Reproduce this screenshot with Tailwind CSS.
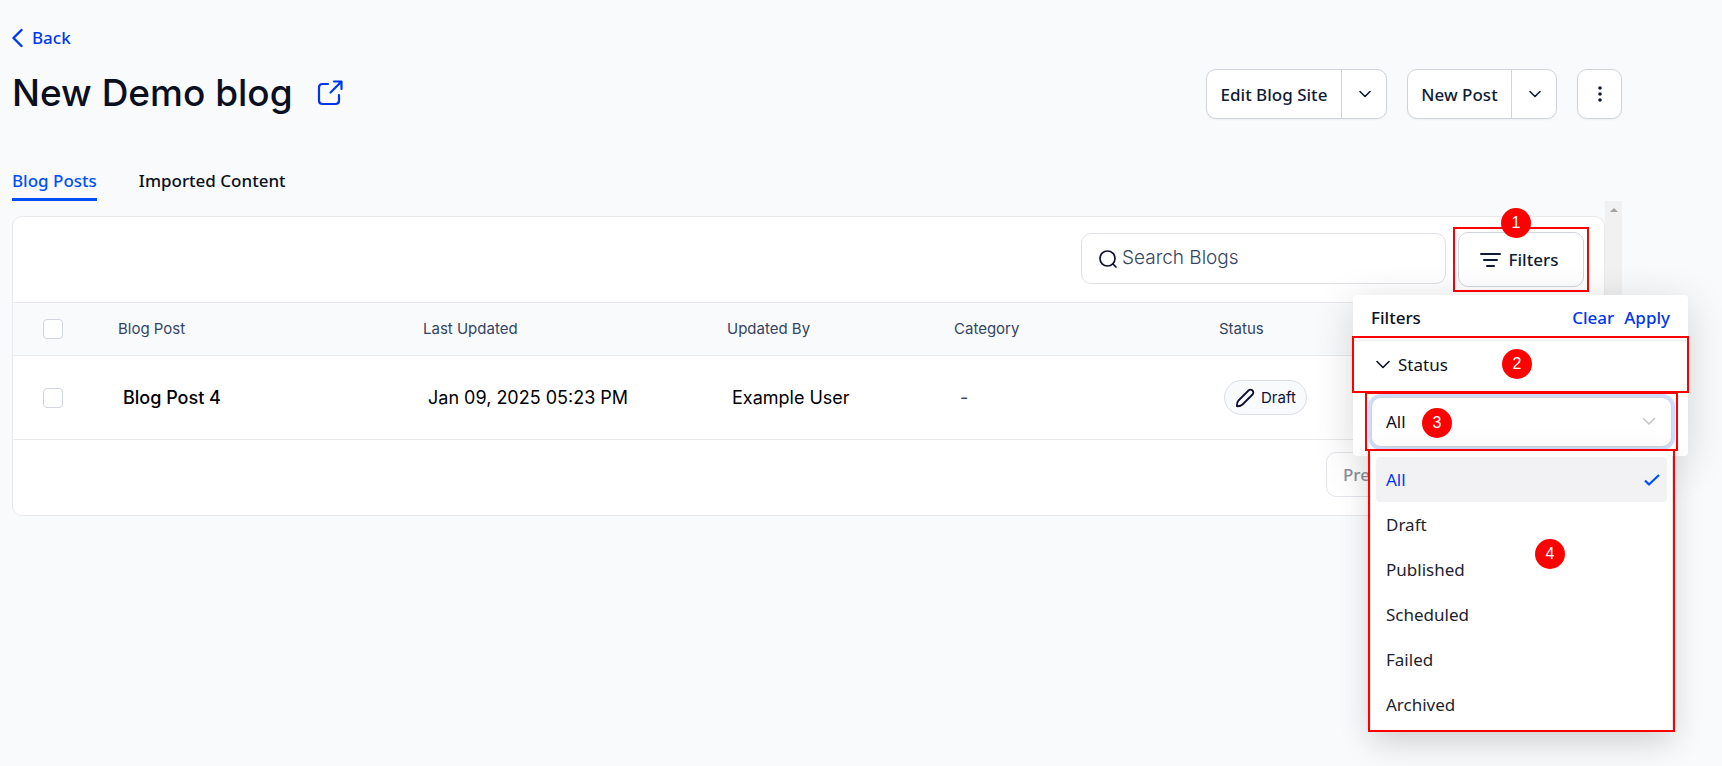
<!DOCTYPE html>
<html lang="en">
<head>
  <meta charset="UTF-8">
  <meta name="viewport" content="width=device-width, initial-scale=1.0">
  <title>New Demo blog</title>
  <script src="https://cdn.jsdelivr.net/npm/@tailwindcss/browser@4"></script>
</head>
<body class="min-h-screen bg-[#f9fafc] font-['Noto_Sans','Open_Sans',sans-serif] text-[#0b1020] overflow-x-hidden">
  <div class="pl-3 pr-[100px] pt-6">
    <header>
      <a href="#" class="inline-flex items-center gap-2 h-7 text-[17px] font-medium text-[#0037ee]">
        <svg class="w-3 h-5" viewBox="0 0 12 20" fill="none" stroke="currentColor" stroke-width="2.4" stroke-linecap="round" stroke-linejoin="round"><path d="M9.500 2 1.500 10 9.500 18"/></svg>
        Back
      </a>
      <div class="flex items-center justify-between mt-[15px]">
        <div class="flex items-center gap-[23px] pb-[2px]">
          <h1 class="text-[37px] leading-[46px] font-medium font-['Inter',sans-serif]">New Demo blog</h1>
          <a href="#" aria-label="Open blog" class="text-[#0037ee]">
            <svg class="w-7 h-7" viewBox="0 0 28 28" fill="none" stroke="currentColor" stroke-width="2.2" stroke-linecap="round" stroke-linejoin="round"><path d="M12 5H6.500Q3 5 3 8.500V21.500Q3 25 6.500 25H19.500Q23 25 23 21.500V16M18 2.500H25.500V10M25 3 14.500 13.500"/></svg>
          </a>
        </div>
        <div class="flex gap-5 text-[17px] font-medium text-[#101c35]">
          <div class="flex h-[50px] bg-white border border-[#d0d5dd] rounded-[10px] shadow-xs">
            <button class="w-[135px] pt-[2px] border-r border-[#d0d5dd]">Edit Blog Site</button>
            <button aria-label="More edit options" class="w-11 pl-[2px] flex items-center justify-center">
              <svg class="w-3 h-2" viewBox="0 0 12 8" fill="none" stroke="currentColor" stroke-width="1.600" stroke-linecap="round" stroke-linejoin="round"><path d="m1 1.500 5 5 5-5"/></svg>
            </button>
          </div>
          <div class="flex h-[50px] bg-white border border-[#d0d5dd] rounded-[10px] shadow-xs">
            <button class="w-[104px] pt-[2px] border-r border-[#d0d5dd]">New Post</button>
            <button aria-label="More post options" class="w-11 pl-[2px] flex items-center justify-center">
              <svg class="w-3 h-2" viewBox="0 0 12 8" fill="none" stroke="currentColor" stroke-width="1.600" stroke-linecap="round" stroke-linejoin="round"><path d="m1 1.500 5 5 5-5"/></svg>
            </button>
          </div>
          <button aria-label="More actions" class="w-[45px] h-[50px] flex items-center justify-center bg-white border border-[#d0d5dd] rounded-[10px] shadow-xs">
            <svg class="w-4 h-4" viewBox="0 0 16 16" fill="currentColor"><circle cx="8" cy="2" r="1.800"/><circle cx="8" cy="8" r="1.800"/><circle cx="8" cy="14" r="1.800"/></svg>
          </button>
        </div>
      </div>
      <nav class="flex gap-[42px] mt-[46px] text-[17px] font-medium">
        <a href="#" class="h-9 leading-8 text-[#0050fa] border-b-3 border-[#0050fa]">Blog Posts</a>
        <a href="#" class="h-9 leading-8">Imported Content</a>
      </nav>
    </header>

    <main class="flex font-['Inter',sans-serif]">
      <div class="grow min-w-0 mt-[15px] bg-white border border-[#e7e9ed] rounded-[10px]">
        <div class="flex items-center justify-end gap-3 h-[85px] pr-5">
          <label class="flex items-center gap-1 w-[365px] h-[51px] px-4 mb-[2px] border border-[#dfe1e6] rounded-[10px]">
            <svg class="w-5 h-5 shrink-0" viewBox="0 0 20 20" fill="none" stroke="#101034" stroke-width="1.700" stroke-linecap="round"><circle cx="9.500" cy="9.500" r="7.500"/><path d="m15 15 3 3"/></svg>
            <input type="text" aria-label="Search Blogs" placeholder="Search Blogs" class="min-w-0 grow text-[19px] font-light outline-none placeholder:text-[#344563]">
          </label>

          <div class="relative">
            <button class="flex items-center justify-center gap-2 w-[126px] h-[55px] pr-1 border border-[#d0d5dd] rounded-[10px] text-[17px] font-medium font-['Noto_Sans','Open_Sans',sans-serif] text-[#101c35]">
              <svg class="w-[21px] h-4" viewBox="0 0 21 16" fill="none" stroke="currentColor" stroke-width="2" stroke-linecap="round"><path d="M1 2h19M4 8h13M7 14h7"/></svg>
              Filters
            </button>
            <div class="absolute -inset-[5px] border-2 border-[#ff0000] pointer-events-none"></div>
            <span class="absolute -top-6 left-[43px] w-[30px] h-[30px] rounded-full bg-[#ff0000] text-white text-center leading-[29px] font-['Liberation_Sans',sans-serif]">1</span>

            <!-- filter panel -->
            <div class="absolute z-10 top-[63px] -right-[104px] w-[335px] h-[161px] bg-white rounded shadow-[0_8px_40px_rgba(0,0,0,0.16)] font-['Noto_Sans','Open_Sans',sans-serif]">
              <div class="flex items-center gap-[10px] h-[46px] px-[18px] border-b border-[#eceef2] text-[17px] font-medium">
                <h2 class="grow">Filters</h2>
                <button class="text-[#0037ee]">Clear</button>
                <button class="text-[#0037ee]">Apply</button>
              </div>
              <div class="relative">
                <button class="flex items-center gap-[7px] w-full h-[52px] px-[22px] pb-1 text-[17px]">
                  <svg class="w-4 h-[10px]" viewBox="0 0 16 10" fill="none" stroke="currentColor" stroke-width="1.600" stroke-linecap="round" stroke-linejoin="round"><path d="m2 1.500 6 6 6-6"/></svg>
                  Status
                </button>
                <div class="absolute -top-[5px] bottom-0 -inset-x-px border-2 border-[#ff0000] pointer-events-none"></div>
                <span class="absolute top-2 left-[149px] w-[30px] h-[30px] rounded-full bg-[#ff0000] text-white text-center leading-[29px] font-['Liberation_Sans',sans-serif]">2</span>
              </div>
              <div class="relative ml-[18px] mr-4 mt-1">
                <select aria-label="Status" class="block appearance-none w-full h-[50px] px-[14px] bg-white border border-[#d0d5dd] rounded-[10px] ring-3 ring-[#cfdcfb] text-[17px]">
                  <option>All</option>
                  <option>Draft</option>
                  <option>Published</option>
                  <option>Scheduled</option>
                  <option>Failed</option>
                  <option>Archived</option>
                </select>
                <svg class="absolute right-4 top-5 w-[14px] h-[9px]" viewBox="0 0 14 9" fill="none" stroke="#c3c5ca" stroke-width="1.600" stroke-linecap="round" stroke-linejoin="round"><path d="m1.500 1.500 5.500 5.500 5.500-5.500"/></svg>
                <div class="absolute -top-[5px] -bottom-1 -inset-x-[6px] border-2 border-[#ff0000] pointer-events-none"></div>
                <span class="absolute top-[11px] left-[51px] w-[30px] h-[30px] rounded-full bg-[#ff0000] text-white text-center leading-[29px] font-['Liberation_Sans',sans-serif]">3</span>

                <!-- open option list -->
                <div class="absolute top-full inset-x-0 mt-1 bg-white rounded-sm shadow-[0_10px_32px_rgba(0,0,0,0.18)]">
                  <ul role="listbox" class="px-[5px] pt-[6px] pb-1 text-[17px] leading-[45px] text-[#1d232e]">
                    <li role="option" aria-selected="true" class="flex items-center justify-between pl-[10px] pr-[7px] rounded bg-[#f2f2f4] text-[#0037ee]">
                      All
                      <svg class="w-4 h-3" viewBox="0 0 16 12" fill="none" stroke="#0050fa" stroke-width="2.200" stroke-linejoin="round"><path d="m1 6.500 4 4L15 1"/></svg>
                    </li>
                    <li role="option" class="px-[10px]">Draft</li>
                    <li role="option" class="px-[10px]">Published</li>
                    <li role="option" class="px-[10px]">Scheduled</li>
                    <li role="option" class="px-[10px]">Failed</li>
                    <li role="option" class="px-[10px]">Archived</li>
                  </ul>
                  <div class="absolute top-0 -bottom-px -inset-x-[3px] border-2 border-t-0 border-[#ff0000] pointer-events-none"></div>
                  <span class="absolute top-[88px] left-[164px] w-[30px] h-[30px] rounded-full bg-[#ff0000] text-white text-center leading-[29px] font-['Liberation_Sans',sans-serif]">4</span>
                </div>
              </div>
            </div>
          </div>
        </div>

        <table class="w-full table-fixed text-left border-y border-[#e7e9ed]">
          <colgroup>
            <col class="w-[89px]">
            <col class="w-[305px]">
            <col class="w-[304px]">
            <col class="w-[227px]">
            <col class="w-[265px]">
            <col>
          </colgroup>
          <thead>
            <tr class="h-[53px] bg-[#f9fafc] text-[15px] text-[#344563] border-b border-[#e7e9ed]">
              <th class="pl-[30px]"><input type="checkbox" aria-label="Select all posts" class="block appearance-none w-5 h-5 bg-white border border-[#d0d5dd] rounded"></th>
              <th class="pl-4 font-normal">Blog Post</th>
              <th class="pl-4 font-normal">Last Updated</th>
              <th class="pl-4 font-normal">Updated By</th>
              <th class="pl-4 font-normal">Category</th>
              <th class="pl-4 font-normal">Status</th>
            </tr>
          </thead>
          <tbody>
            <tr class="h-[84px] text-lg text-black">
              <td class="pl-[30px]"><input type="checkbox" aria-label="Select Blog Post 4" class="block appearance-none w-5 h-5 bg-white border border-[#d0d5dd] rounded"></td>
              <td class="pl-[21px] font-medium">Blog Post 4</td>
              <td class="pl-[21px]">Jan 09, 2025 05:23 PM</td>
              <td class="pl-[21px]">Example User</td>
              <td class="pl-[22px] text-[#344563]">-</td>
              <td class="pl-[21px]">
                <span class="inline-flex items-center gap-[6px] h-[35px] px-[10px] align-middle border border-[#dcdfe6] rounded-full bg-[#f9fafc] text-[15px] text-[#101034]">
                  <svg class="w-5 h-5" viewBox="0 0 20 20" fill="none" stroke="currentColor" stroke-width="1.800" stroke-linejoin="round"><path d="M1.800 18.200Q1.500 14.500 3.500 12.500L13.500 2.500A2.800 2.800 0 0 1 17.500 6.500L7.500 16.500Q5.500 18.500 1.800 18.200Z"/></svg>
                  Draft
                </span>
              </td>
            </tr>
          </tbody>
        </table>

        <!-- pagination -->
        <div class="flex items-start justify-end h-[75px] pt-3 pr-[170px] font-['Noto_Sans','Open_Sans',sans-serif] text-[17px] font-medium text-[#8a909c]">
          <button disabled class="w-[108px] h-[45px] px-4 text-left border border-[#e2e5eb] rounded-[10px]">Pre</button>
        </div>
      </div>

      <!-- scroll track -->
      <div class="w-[17px] shrink-0 bg-[#f1f1f1]">
        <div class="mx-auto mt-[7px] w-0 border-x-4 border-x-transparent border-b-4 border-b-[#a3a3a3]"></div>
      </div>
    </main>
  </div>
</body>
</html>
